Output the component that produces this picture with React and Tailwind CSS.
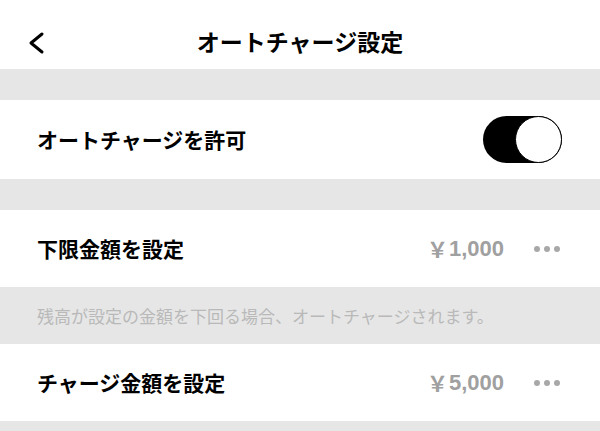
import { useState } from "react";

const font = { fontFamily: '"Noto Sans CJK JP", "Noto Sans", sans-serif' };

const Dots = () => (
  <div className="flex items-center gap-[4px] ml-[30px] mr-[2px]">
    <span className="w-[6px] h-[6px] rounded-full bg-[#a8a8a8]" />
    <span className="w-[6px] h-[6px] rounded-full bg-[#a8a8a8]" />
    <span className="w-[6px] h-[6px] rounded-full bg-[#a8a8a8]" />
  </div>
);

const AmountRow = ({ label, value }) => (
  <div className="bg-white h-[77px] flex items-center px-[37px] pr-[38px]">
    <span className="text-[21px] font-bold text-black flex-1">{label}</span>
    <span className="text-[21px] font-semibold text-[#a0a0a0] flex items-center">
      <span className="mr-[1px]">￥</span>
      <span style={{ fontFamily: '"Liberation Sans", sans-serif' }} className="text-[22px] font-bold">
        {value}
      </span>
    </span>
    <Dots />
  </div>
);

export default function App() {
  const [enabled, setEnabled] = useState(true);

  return (
    <div className="w-[600px] h-[431px] bg-[#e6e6e6] overflow-hidden" style={font}>
      <div className="bg-white h-[69px] relative flex items-center justify-center">
        <svg
          className="absolute left-[25px] top-[30px]"
          width="22"
          height="26"
          viewBox="0 0 22 26"
          fill="none"
        >
          <path
            d="M17 4 L6 13 L17 22"
            stroke="#000"
            strokeWidth="3"
            strokeLinecap="round"
            strokeLinejoin="round"
          />
        </svg>
        <h1 className="text-[23px] font-bold text-black mt-[14px]">
          オートチャージ設定
        </h1>
      </div>

      <div className="h-[31px]" />

      <div className="bg-white h-[79px] flex items-center px-[37px] pr-[38px]">
        <span className="text-[21px] font-bold text-black flex-1">
          オートチャージを許可
        </span>
        <button
          onClick={() => setEnabled(!enabled)}
          className={`w-[79px] h-[47px] rounded-full flex items-center ${
            enabled ? "bg-black justify-end" : "bg-[#e6e6e6] justify-start"
          }`}
        >
          <span className="w-[47px] h-[47px] rounded-full bg-white border-[1.5px] border-black" />
        </button>
      </div>

      <div className="h-[31px]" />

      <AmountRow label="下限金額を設定" value="1,000" />

      <div className="h-[57px] flex items-center px-[37px]">
        <p className="text-[17px] text-[#b9b9b9] whitespace-nowrap">
          残高が設定の金額を下回る場合、オートチャージされます。
        </p>
      </div>

      <AmountRow label="チャージ金額を設定" value="5,000" />
    </div>
  );
}
